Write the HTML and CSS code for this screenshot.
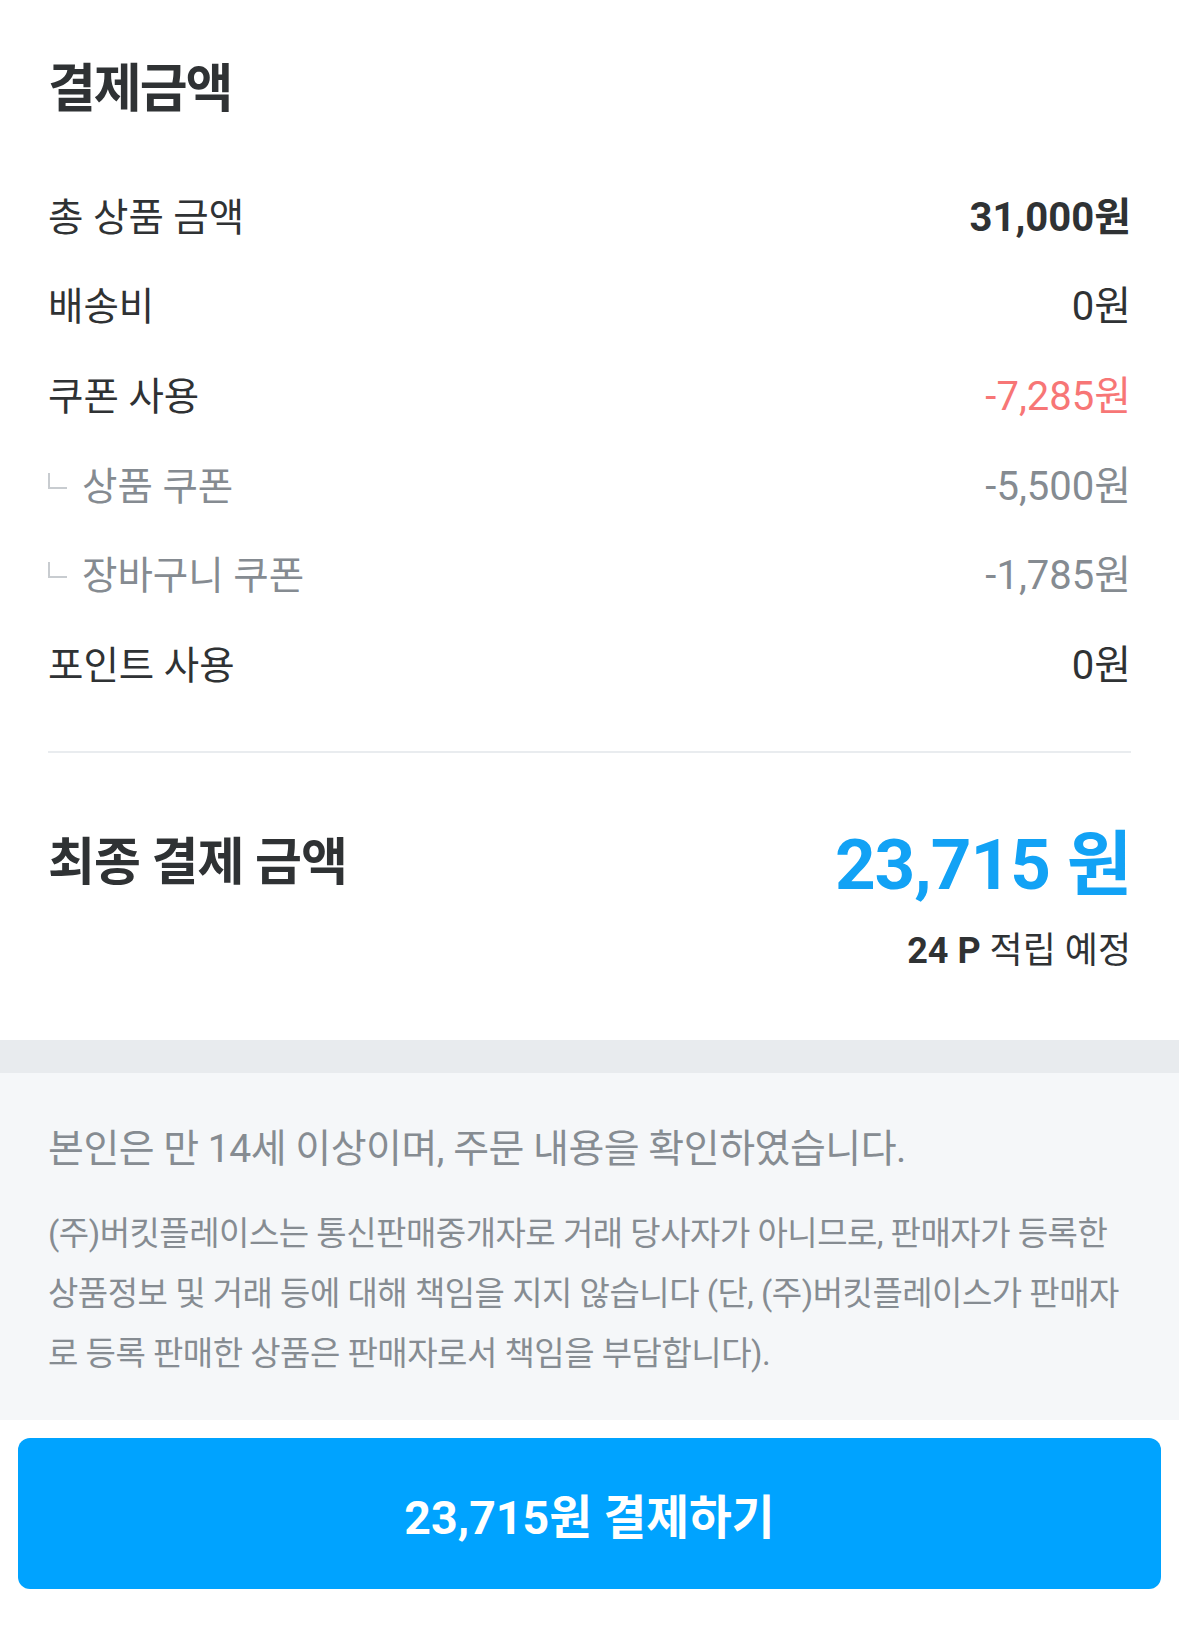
FILE: index.html
```html
<!DOCTYPE html>
<html lang="ko">
<head>
    <meta charset="UTF-8">
    <meta name="viewport" content="width=device-width, initial-scale=1.0">
    <title>결제금액</title>
    <link rel="stylesheet" href="styles.css">
</head>
<body>
    <div class="summary">
        <h2 class="summary-title">결제금액</h2>
        <div class="price-list">
            <div class="price-row">
                <span>총 상품 금액</span>
                <span class="value bold">31,000원</span>
            </div>
            <div class="price-row">
                <span>배송비</span>
                <span class="value">0원</span>
            </div>
            <div class="price-row">
                <span>쿠폰 사용</span>
                <span class="value discount">-7,285원</span>
            </div>
            <div class="price-row sub">
                <span class="sub-label"><i class="corner"></i>상품 쿠폰</span>
                <span class="value">-5,500원</span>
            </div>
            <div class="price-row sub">
                <span class="sub-label"><i class="corner"></i>장바구니 쿠폰</span>
                <span class="value">-1,785원</span>
            </div>
            <div class="price-row">
                <span>포인트 사용</span>
                <span class="value">0원</span>
            </div>
        </div>

        <div class="total">
            <div class="total-row">
                <span class="total-label">최종 결제 금액</span>
                <span class="total-value">23,715 원</span>
            </div>
            <div class="points"><b>24 P</b> 적립 예정</div>
        </div>
    </div>

    <div class="divider-band"></div>

    <div class="notice">
        <p class="notice-main">본인은 만 14세 이상이며, 주문 내용을 확인하였습니다.</p>
        <p class="notice-sub">(주)버킷플레이스는 통신판매중개자로 거래 당사자가 아니므로, 판매자가 등록한 상품정보 및 거래 등에 대해 책임을 지지 않습니다 (단, (주)버킷플레이스가 판매자로 등록 판매한 상품은 판매자로서 책임을 부담합니다).</p>
    </div>

    <div class="pay">
        <button class="pay-button">23,715원 결제하기</button>
    </div>
</body>
</html>
```

FILE: styles.css
```css
body {
    margin: 0;
    font-family: Roboto, "Noto Sans CJK KR", sans-serif;
    color: #2f3234;
    background-color: #fff;
}
.summary {
    padding: 52px 48px 0;
}
.summary-title {
    margin: 0;
    font-size: 52px;
    line-height: 76px;
    font-weight: bold;
    letter-spacing: -2px;
}
.price-list {
    margin-top: 41px;
    padding-bottom: 44px;
    border-bottom: 2px solid #e9ecef;
}
.price-row {
    display: flex;
    justify-content: space-between;
    align-items: center;
    height: 89.6px;
    font-size: 38.5px;
}
.price-row .value {
    font-size: 40px;
}
.price-row .value.bold {
    font-weight: bold;
}
.price-row .value.discount {
    color: #f77676;
}
.price-row.sub {
    color: #858b91;
}
.sub-label {
    display: flex;
    align-items: center;
}
.corner {
    display: inline-block;
    width: 17px;
    height: 14px;
    margin: 0 15px 0 0;
    border-left: 2px solid #c8ccd0;
    border-bottom: 2px solid #c8ccd0;
    position: relative;
    top: -2px;
}
.total {
    padding: 65px 0 67px;
}
.total-row {
    display: flex;
    justify-content: space-between;
    align-items: center;
    height: 80px;
}
.total-label {
    font-size: 51px;
    font-weight: bold;
    letter-spacing: -1px;
}
.total-value {
    font-size: 71px;
    font-weight: bold;
    color: #12a2f5;
    letter-spacing: -1px;
}
.points {
    margin-top: 31px;
    text-align: right;
    font-size: 36px;
    line-height: 44px;
}
.divider-band {
    height: 33px;
    background-color: #e8ebee;
}
.notice {
    background-color: #f5f7f9;
    padding: 51px 48px 36px;
    color: #868c92;
}
.notice p {
    margin: 0;
}
.notice-main {
    font-size: 39px;
    line-height: 50px;
    letter-spacing: -0.5px;
}
.notice-sub {
    margin-top: 30px !important;
    font-size: 33px;
    line-height: 60px;
    letter-spacing: -0.5px;
}
.pay {
    padding: 18px;
}
.pay-button {
    display: block;
    width: 100%;
    height: 151px;
    border: none;
    border-radius: 12px;
    background-color: #00a3ff;
    color: #fff;
    font-family: Roboto, "Noto Sans CJK KR", sans-serif;
    font-size: 46.5px;
    font-weight: bold;
    cursor: pointer;
}
```
